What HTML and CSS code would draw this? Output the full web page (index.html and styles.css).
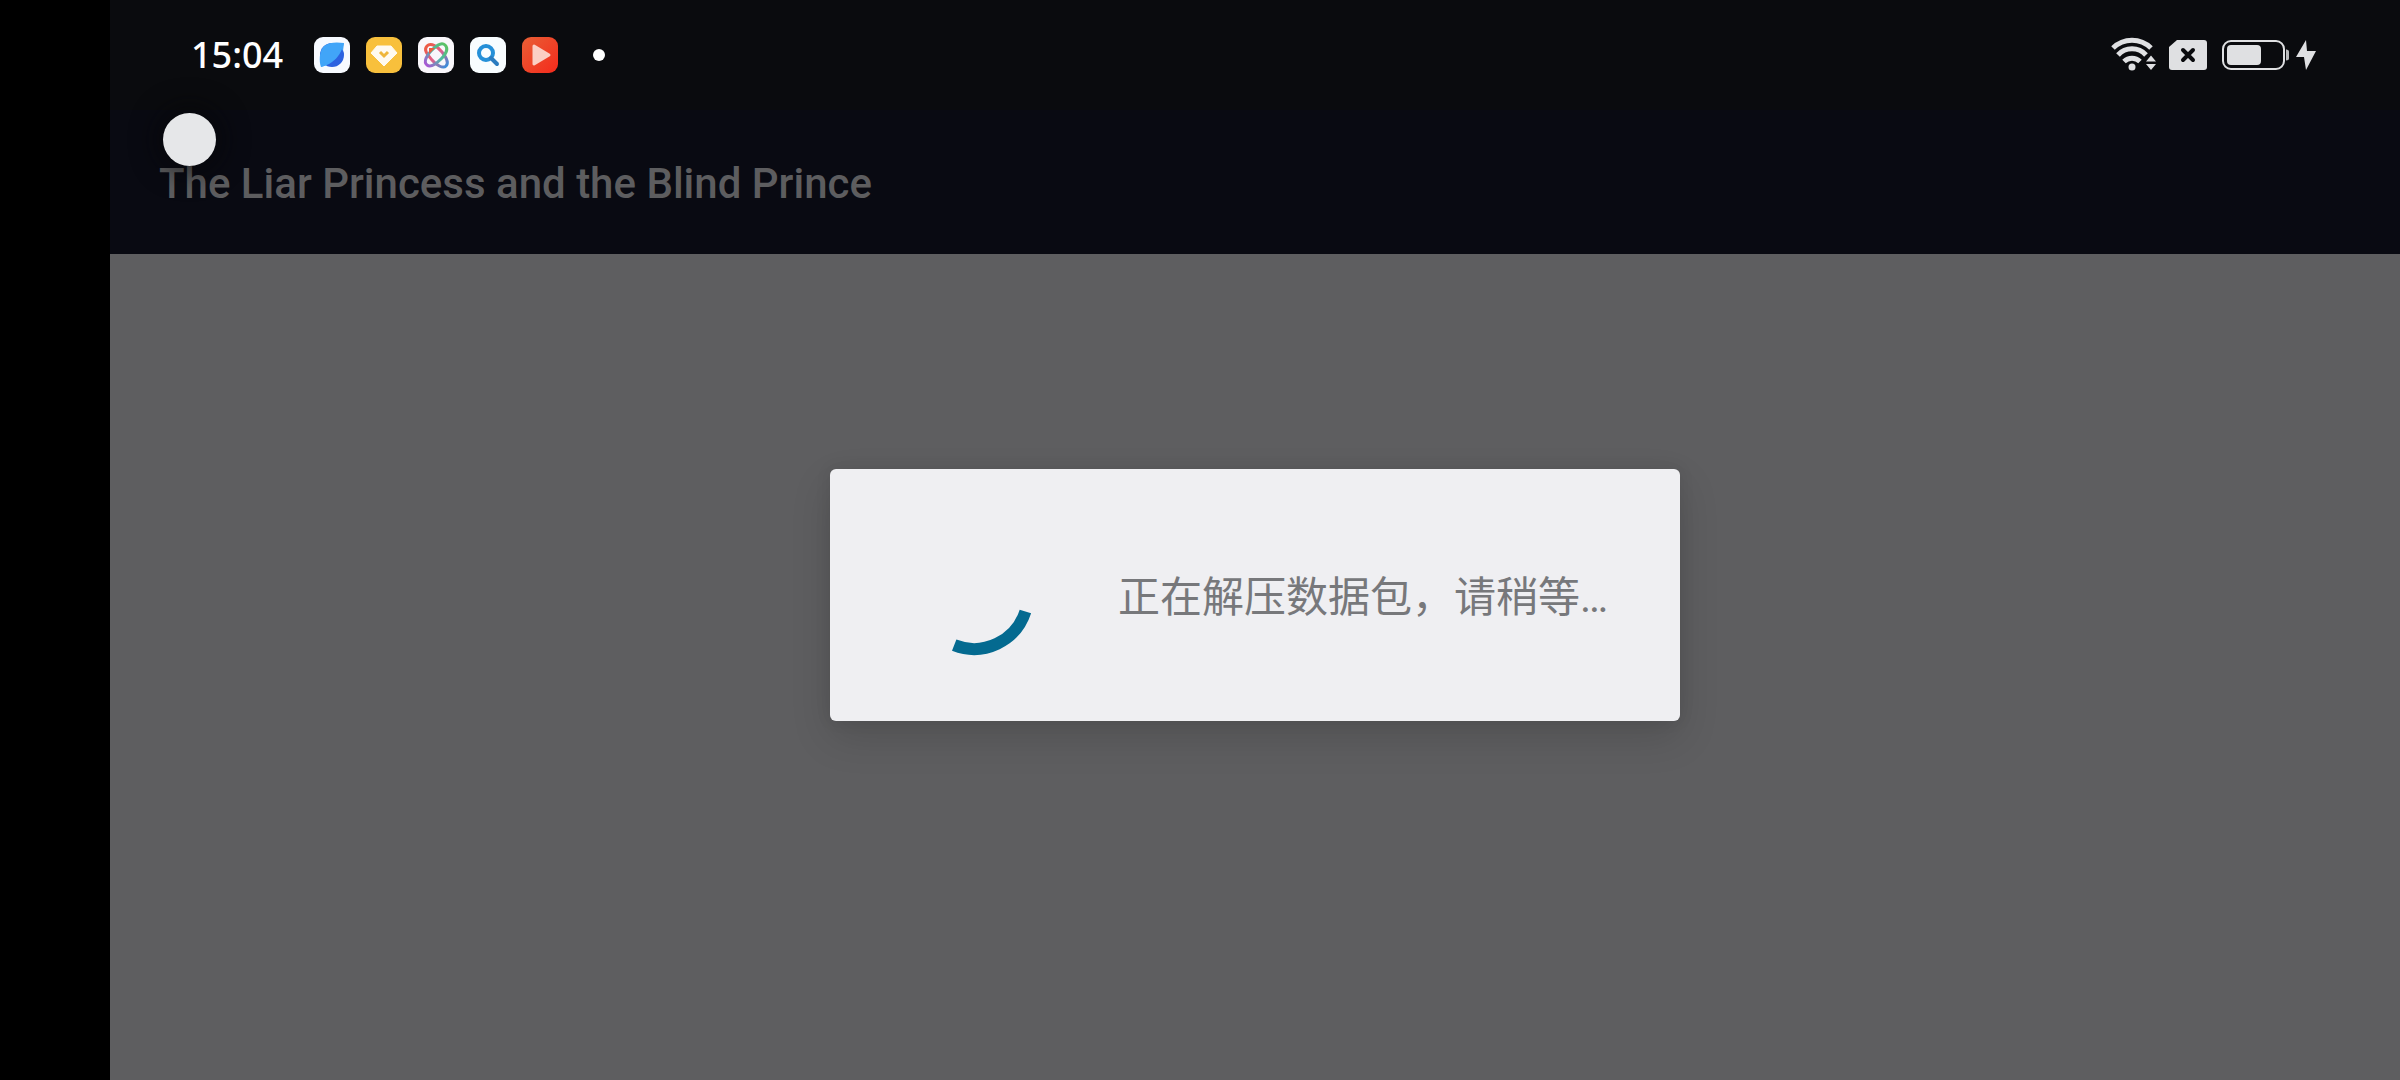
FILE: index.html
```
<!DOCTYPE html>
<html lang="zh-CN">
<head>
    <meta charset="utf-8">
    <meta name="viewport" content="width=device-width, initial-scale=1">
    <title>The Liar Princess and the Blind Prince</title>
    <link rel="stylesheet" href="styles.css">
</head>
<body>

<div class="cutout"></div>

<div class="screen">
    <div class="status-bar">
        <time class="clock">15:04</time>
        <div class="notifications">
            <svg class="app-icon" viewBox="0 0 36 36">
                <rect width="36" height="36" rx="9" fill="#f7faff"/>
                <circle cx="18" cy="18" r="12" fill="#2c62e0"/>
                <path d="M7 30C5 25 5 14 10 9c5-4 13-4 20-3-2 8-6 15-12 19-4 3-8 4-11 5z" fill="#41a5f8"/>
                <path d="M30 6l-1 8-4-6zM7 30l0-7 6 5z" fill="#41a5f8"/>
            </svg>
            <svg class="app-icon" viewBox="0 0 36 36">
                <rect width="36" height="36" rx="9" fill="#f8c03c"/>
                <path d="M11 9h14l6 7-13 13L5 16z" fill="#fffaf0" stroke="#fffaf0" stroke-width="1" stroke-linejoin="round"/>
                <path d="M14 15l4 4 4-4" fill="none" stroke="#efb63b" stroke-width="3"/>
            </svg>
            <svg class="app-icon" viewBox="0 0 36 36">
                <defs>
                    <linearGradient id="orbit-a" x1="0" y1="0" x2="1" y2="1">
                        <stop offset="0" stop-color="#ee5a3c"/>
                        <stop offset=".5" stop-color="#e0608c"/>
                        <stop offset="1" stop-color="#2f8fe0"/>
                    </linearGradient>
                    <linearGradient id="orbit-b" x1="1" y1="0" x2="0" y2="1">
                        <stop offset="0" stop-color="#5cc35c"/>
                        <stop offset=".5" stop-color="#4fb8a8"/>
                        <stop offset="1" stop-color="#b04fd8"/>
                    </linearGradient>
                </defs>
                <rect width="36" height="36" rx="9" fill="#f9f7fb"/>
                <g fill="none" stroke-width="3">
                    <path d="M9 9c4-4 11 1 15 6s7 11 4 14-10-1-14-6S5 13 9 9z" stroke="url(#orbit-a)"/>
                    <path d="M27 8c4 4 0 10-4 14s-10 9-14 6 0-10 4-14S23 4 27 8z" stroke="url(#orbit-b)"/>
                </g>
                <path d="M11 11l6 0-6 6z" fill="#ec5b3c"/>
            </svg>
            <svg class="app-icon" viewBox="0 0 36 36">
                <rect width="36" height="36" rx="9" fill="#f8fdff"/>
                <circle cx="16" cy="16" r="7" fill="none" stroke="#2590d8" stroke-width="4"/>
                <path d="M21 21l6 6" stroke="#2a7cc0" stroke-width="4" stroke-linecap="round"/>
            </svg>
            <svg class="app-icon" viewBox="0 0 36 36">
                <defs>
                    <linearGradient id="player" x1="0" y1="0" x2="1" y2="1">
                        <stop offset="0" stop-color="#e85f35"/>
                        <stop offset="1" stop-color="#f52a1c"/>
                    </linearGradient>
                </defs>
                <rect width="36" height="36" rx="9" fill="url(#player)"/>
                <path d="M12 9l15 9-15 9z" fill="#fbcfc4" stroke="#fbcfc4" stroke-width="3" stroke-linejoin="round"/>
            </svg>
        </div>
        <span class="more-dot"></span>

        <div class="system-icons">
            <!-- wifi -->
            <svg width="46" height="36" viewBox="0 0 46 36">
                <g fill="none" stroke="#dfe0e2" stroke-width="5">
                    <path d="M2 11a27 27 0 0 1 38 0"/>
                    <path d="M7 18a19 19 0 0 1 28 0"/>
                    <path d="M13 24.500a11.500 11.500 0 0 1 16 0"/>
                </g>
                <circle cx="21" cy="30" r="3.500" fill="#dfe0e2"/>
                <path d="M40 18.500l5 6H35zM35 27h10l-5 6z" fill="#dfe0e2" stroke="#0a0b0e" stroke-width="1" paint-order="stroke"/>
            </svg>
            <!-- no sim -->
            <svg class="sim" width="38" height="30" viewBox="0 0 38 30">
                <path d="M8 0h27a3 3 0 0 1 3 3v24a3 3 0 0 1-3 3H3a3 3 0 0 1-3-3V7z" fill="#dfe0e2"/>
                <path d="M14 10l10 10M24 10L14 20" stroke="#0a0b0e" stroke-width="4" stroke-linecap="round"/>
            </svg>
            <!-- battery -->
            <svg class="battery" width="68" height="30" viewBox="0 0 68 30">
                <rect x="1" y="1" width="61" height="28" rx="8" fill="none" stroke="#dfe0e2" stroke-width="2"/>
                <rect x="5" y="5" width="34" height="20" rx="4" fill="#dfe0e2"/>
                <path d="M64 9.500c2 0 3 1 3 2v7c0 1-1 2-3 2z" fill="#b9babc"/>
            </svg>
            <svg class="bolt" width="20" height="32" viewBox="0 0 20 32">
                <path d="M10 1L0 18h8v0L10 31 20 12h-9z" fill="#dfe0e2"/>
            </svg>
        </div>
    </div>

    <header class="app-bar">
        <h1>The Liar Princess and the Blind Prince</h1>
    </header>

    <main class="content"></main>

    <div class="overlay">
        <div class="dialog" role="dialog" aria-labelledby="message">
            <svg class="spinner" viewBox="0 0 144 144">
                <path d="M52.200 122.200A54 54 0 0 0 123.400 88.500" fill="none" stroke="#046a90" stroke-width="12"/>
            </svg>
            <p id="message">正在解压数据包，请稍等…</p>
        </div>
    </div>

    <button class="assist-ball" type="button" aria-label="Assistive ball"></button>
</div>

</body>
</html>
```
FILE: styles.css
```
* { box-sizing: border-box; }

body {
    margin: 0;
    min-height: 100vh;
    display: flex;
    background-color: #000;
    font-family: Roboto, "Noto Sans CJK SC", sans-serif;
}

.cutout { flex: 0 0 110px; }

.screen {
    position: relative;
    flex: 1;
    display: flex;
    flex-direction: column;
    background-color: #5e5e60;
}

/* status bar */
.status-bar {
    display: flex;
    align-items: center;
    height: 110px;
    padding: 0 84px 0 81px;
    background-color: #0a0b0e;
}

.clock {
    color: #fff;
    font-family: "Noto Sans", sans-serif;
    font-size: 36px;
    font-weight: 500;
    line-height: 36px;
}

.notifications { display: flex; gap: 16px; margin-left: 31px; }

.app-icon { width: 36px; height: 36px; }

.more-dot {
    width: 12px;
    height: 12px;
    margin-left: 35px;
    border-radius: 50%;
    background-color: #fff;
}

.system-icons { display: flex; align-items: center; margin-left: auto; }

.sim { margin-left: 12px; }

.battery { margin-left: 15px; }

.bolt { margin-left: 6px; }

/* app bar */
.app-bar {
    display: flex;
    align-items: center;
    height: 144px;
    padding: 4px 49px 0;
    background-color: #090a12;
}

.app-bar h1 {
    margin: 0;
    color: #5d5d5f;
    font-size: 42px;
    font-weight: 500;
    line-height: 48px;
}

.content { flex: 1; }

/* loading dialog */
.overlay {
    position: absolute;
    inset: 110px 0 0;
    display: flex;
    align-items: center;
    justify-content: center;
}

.dialog {
    display: flex;
    align-items: center;
    gap: 72px;
    padding: 54px 72px;
    border-radius: 6px;
    background-color: #efeff2;
    box-shadow: 0 16px 40px rgba(0, 0, 0, 0.14), 0 0 16px rgba(0, 0, 0, 0.08);
}

.spinner { width: 144px; height: 144px; }

.dialog p {
    margin: 0;
    padding-top: 6px;
    color: #77787b;
    font-size: 42px;
    line-height: 50px;
}

/* floating button over everything */
.assist-ball {
    position: absolute;
    left: 53px;
    top: 113px;
    width: 53px;
    height: 53px;
    padding: 0;
    border: none;
    border-radius: 50%;
    background-color: #e6e7e9;
    box-shadow: 0 0 24px 8px rgba(6, 7, 8, 0.6);
}
```
